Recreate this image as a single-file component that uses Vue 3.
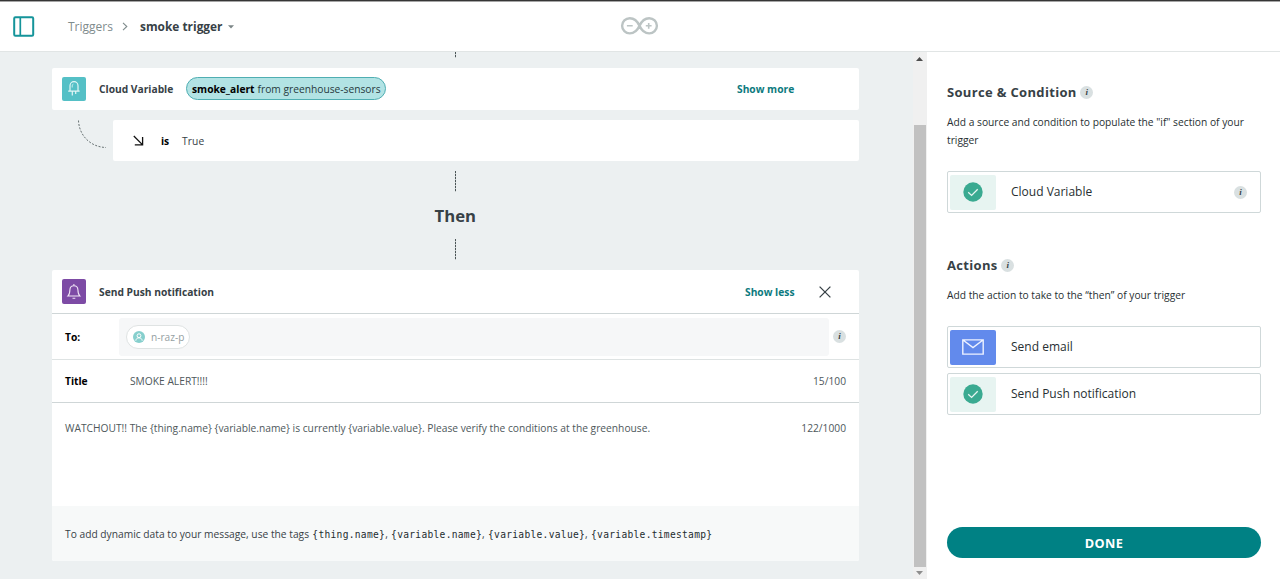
<script setup>
const tags = ['{thing.name}', '{variable.name}', '{variable.value}', '{variable.timestamp}']
const actions = [
  { label: 'Send email', kind: 'mail' },
  { label: 'Send Push notification', kind: 'check' },
]
</script>

<template>
  <div class="app">
    <header class="topbar">
      <svg class="panel-icon" width="22" height="22" viewBox="0 0 22 22" fill="none" stroke="#15949a" stroke-width="2">
        <rect x="1.2" y="1.2" width="19" height="18.6" rx="1.2" />
        <path d="M7.3 1v19" stroke-width="1.7" />
      </svg>
      <nav class="crumbs">
        <span class="crumb">Triggers</span>
        <svg class="chev" width="6" height="9" viewBox="0 0 6 9" fill="none" stroke="#7f8c8d" stroke-width="1.1"><path d="M1 .8l3.8 3.7L1 8.2" /></svg>
        <span class="current">smoke trigger</span>
        <svg class="caret" width="6" height="4" viewBox="0 0 6 4"><path d="M0 .2h6L3 3.6z" fill="#7b8586" /></svg>
      </nav>
      <svg class="logo" width="39" height="20" viewBox="0 0 39 20" fill="none" stroke="#bcc4c4" stroke-width="2.4">
        <path d="M19.5 9.8C17.6 5.5 14.2 2.2 9.8 2.2a7.7 7.6 0 0 0 0 15.2c4.4 0 7.800-3.300 9.700-7.600s5.300-7.600 9.700-7.600a7.700 7.600 0 0 1 0 15.200c-4.400 0-7.800-3.300-9.700-7.600z" />
        <path d="M6.900 9.800h5.800M25.800 9.800h5.800M28.700 6.900v5.800" stroke-width="1.600" />
      </svg>
    </header>

    <main class="body">
      <section class="canvas">
        <div class="dots dots-top"></div>
        <div class="card source">
          <span class="tile teal">
            <svg width="24" height="24" viewBox="0 0 24 24" fill="none" stroke="#e4f6f6" stroke-width="1.2">
              <path d="M8 14V8.700a4 4 0 0 1 8 0V14M6.200 14.100h11.400M10.300 14v4.500M13.700 14v3" />
              <path d="M10.200 10.500V8.800c0-1 .5-1.500 1.200-1.700" stroke-width=".8" />
            </svg>
          </span>
          <span class="name src-name">Cloud Variable</span>
          <span class="pill"><b>smoke_alert</b><span class="from">from greenhouse-sensors</span></span>
          <span class="link more">Show more</span>
        </div>
        <div class="cond-row">
          <svg class="curve" width="61" height="40" viewBox="0 0 61 40" fill="none" stroke="#667071" stroke-width="1" stroke-dasharray="2 1.500"><path d="M26.500 0.500C27 15 38 27 54 27.500" /></svg>
          <div class="card cond">
            <svg width="11" height="11" viewBox="0 0 11 11" fill="none" stroke="#111" stroke-width="1.300"><path d="M.8 1l8.600 8.600M9.600 2v7.800H1.800" /></svg>
            <b class="is">is</b>
            <span class="true">True</span>
          </div>
        </div>
        <div class="dots dots-a"></div>
        <h2 class="then">Then</h2>
        <div class="dots dots-b"></div>

        <div class="card push">
          <div class="push-head">
            <span class="tile purple">
              <svg width="24" height="25" viewBox="0 0 24 25" fill="none" stroke="#f0e6f6" stroke-width="1.100">
                <path d="M6 17c1.700-1.600 1.800-3 1.900-6.200.1-2.500 1.700-4 4-4s3.900 1.500 4 4c.1 3.200.2 4.600 1.900 6.200zM11.900 5v1.800M10.500 19.300h2.800" />
              </svg>
            </span>
            <span class="name push-name">Send Push notification</span>
            <span class="link less">Show less</span>
            <svg class="close" width="12" height="12" viewBox="0 0 12 12" fill="none" stroke="#374146" stroke-width="1.300"><path d="M.6.6l10.800 10.800M11.400.6L.6 11.400" /></svg>
          </div>
          <div class="to-row">
            <b class="label to-label">To:</b>
            <div class="field">
              <span class="chip">
                <svg width="12" height="12" viewBox="0 0 12 12"><circle cx="6" cy="6" r="6" fill="#86cfcd" /><g fill="none" stroke="#fff" stroke-width="1"><circle cx="6" cy="4.700" r="1.900" /><path d="M2.800 9.700c.3-2 1.400-2.900 3.200-2.900s2.900.9 3.200 2.900" /></g></svg>
                <span>n-raz-p</span>
              </span>
            </div>
            <i class="info">i</i>
          </div>
          <div class="title-row">
            <b class="label title-label">Title</b>
            <span class="title-val">SMOKE ALERT!!!!</span>
            <span class="count">15/100</span>
          </div>
          <div class="msg-row">
            <span class="msg">WATCHOUT!! The {thing.name} {variable.name} is currently {variable.value}. Please verify the conditions at the greenhouse.</span>
            <span class="count">122/1000</span>
          </div>
          <div class="hint">
            <span class="hint-text">To add dynamic data to your message, use the tags</span>
            <span v-for="(t, i) in tags" :key="t" class="tag"><code>{{ t }}</code><template v-if="i < tags.length - 1">,</template></span>
          </div>
        </div>
      </section>

      <div class="scroll">
        <svg width="7" height="4" viewBox="0 0 7 4"><path d="M0 4h7L3.500 0z" fill="#4d4d4d" /></svg>
        <div class="thumb"></div>
        <svg width="7" height="4" viewBox="0 0 7 4"><path d="M0 0h7L3.500 4z" fill="#8e8e8e" /></svg>
      </div>

      <aside class="side">
        <h3><span>Source &amp; Condition</span><i class="info">i</i></h3>
        <p>Add a source and condition to populate the "if" section of your<br />trigger</p>
        <div class="opt">
          <span class="thumbnail check">
            <svg width="20" height="20" viewBox="0 0 20 20"><circle cx="10" cy="10" r="9.700" fill="#3aaa91" /><path d="M5.200 10.200l3.400 3.200 6.100-6.200" fill="none" stroke="#e8f5f2" stroke-width="1.300" /></svg>
          </span>
          <span class="opt-label">Cloud Variable</span>
          <i class="info">i</i>
        </div>
        <h3 class="second"><span>Actions</span><i class="info">i</i></h3>
        <p>Add the action to take to the “then” of your trigger</p>
        <div v-for="a in actions" :key="a.label" class="opt">
          <span class="thumbnail" :class="a.kind">
            <svg v-if="a.kind === 'mail'" width="22" height="16" viewBox="0 0 22 16" fill="none" stroke="#eef2ff" stroke-width="1.400"><path d="M.8.9h20.400v14.200H.8zM1 1l10 7.500L21 1" /></svg>
            <svg v-else width="20" height="20" viewBox="0 0 20 20"><circle cx="10" cy="10" r="9.700" fill="#3aaa91" /><path d="M5.200 10.200l3.400 3.200 6.100-6.200" fill="none" stroke="#e8f5f2" stroke-width="1.300" /></svg>
          </span>
          <span class="opt-label">{{ a.label }}</span>
        </div>
        <button class="done">DONE</button>
      </aside>
    </main>
  </div>
</template>

<style>
body { margin: 0; overflow: hidden; }
</style>

<style scoped>
* { box-sizing: border-box; }
.app { width: 1280px; height: 579px; display: flex; flex-direction: column; background: #fff; font-family: "Open Sans", "Noto Sans", sans-serif; color: #374146; font-size: 10.240px; overflow: hidden; white-space: nowrap; }
svg { display: block; flex: none; }
.topbar { height: 52px; flex: none; border-top: 1px solid #353535; box-shadow: inset 0 1px #a5a5a5; border-bottom: 1px solid #e1e5e5; display: flex; align-items: center; padding-left: 13px; }
.panel-icon { margin-top: 1px; }
.crumbs { display: flex; align-items: center; margin-left: 33px; width: 552px; font-size: 12px; }
.crumb { color: #7f8c8d; width: 54px; }
.current { font-weight: 700; margin-left: 12px; width: 88px; font-size: 11.900px; }
.caret { margin-top: 2px; }
.body { flex: 1; display: flex; min-height: 0; }
.canvas { width: 913px; background: #ecf0f1; padding: 0 54px 0 52px; display: flex; flex-direction: column; }
.dots { width: 1px; margin-left: 403px; flex: none; background: repeating-linear-gradient(to bottom, #4b5557 0 2px, #c4caca 2px 3px); }
.dots-top { height: 6px; margin-bottom: 10px; }
.dots-a { height: 21px; margin-top: 10px; }
.dots-b { height: 21px; margin-bottom: 10px; }
.card { background: #fff; border-radius: 2px; }
.source { height: 41.500px; flex: none; display: flex; align-items: center; padding-left: 9.500px; }
.tile { width: 24px; height: 24px; border-radius: 2px; flex: none; }
.teal { background: #55c0c6; }
.purple { background: #7d4ba5; height: 25px; }
.name { font-weight: 700; margin-left: 13.500px; }
.src-name { width: 87px; }
.pill { height: 23px; width: 200px; border: 1px solid #4faeb2; border-radius: 12px; background: #b2e3e4; display: flex; align-items: center; padding-left: 5px; gap: 3px; color: #000; }
.from { color: #26393d; }
.link { color: #0c7a7e; font-weight: 700; }
.more { margin-left: 351px; }
.cond-row { display: flex; margin-top: 10.500px; flex: none; }
.cond { flex: 1; height: 41px; display: flex; align-items: center; padding-left: 20px; }
.is { color: #000; margin-left: 17px; width: 21px; }
.true { letter-spacing: .1px; }
.then { margin: 0 0 0 382.500px; height: 47px; line-height: 48px; font-size: 16.700px; font-weight: 700; flex: none; }
.push { height: 291px; flex: none; display: flex; flex-direction: column; }
.push-head { height: 44px; border-bottom: 1px solid #cfd6d7; display: flex; align-items: center; padding-left: 9.500px; }
.push-name { width: 646px; }
.less { width: 74px; }
.to-row { height: 46px; border-bottom: 1px solid #dee3e3; display: flex; align-items: center; padding: 0 13px; }
.label { color: #000; }
.to-label { width: 54px; }
.field { width: 710px; height: 38px; border-radius: 3px; background: #f6f7f8; padding-left: 7px; display: flex; align-items: center; }
.chip { height: 24px; width: 64px; border: 1px solid #dfe3e3; border-radius: 12px; background: #fff; display: flex; align-items: center; padding-left: 6px; gap: 6px; color: #95a0a2; font-size: 10.100px; }
.info { width: 13px; height: 13px; border-radius: 50%; background: #d9e0e1; color: #374146; font: italic 700 9px/13px "Liberation Serif", serif; letter-spacing: 0; text-align: center; flex: none; }
.to-row .info { margin-left: 4px; }
.title-row { height: 43px; border-bottom: 1px solid #cfd6d7; display: flex; align-items: center; padding: 0 13px; }
.title-label { width: 65px; }
.title-val, .msg, .count { color: #4e585b; }
.count { margin-left: auto; }
.msg-row { height: 103px; padding: 18px 13px; display: flex; }
.hint { height: 55px; background: #f7f9f9; display: flex; align-items: center; padding-left: 13px; gap: 3.300px; border-radius: 0 0 2px 2px; }
.tag code { font-family: "DejaVu Sans Mono", monospace; font-size: 9.600px; letter-spacing: .29px; color: #242c2f; }
.scroll { width: 14px; background: #f0f0f0; display: flex; flex-direction: column; align-items: center; padding: 5px 1px 4px 0; }
.thumb { width: 12px; height: 442px; margin: 64px 0 4px 1px; background: #c1c1c1; flex: none; }
.side { flex: 1; padding: 31px 19px 0 20px; display: flex; flex-direction: column; color: #272f32; }
h3 { margin: 0; height: 18px; display: flex; align-items: center; gap: 3.500px; font-size: 13px; letter-spacing: .33px; color: #374146; flex: none; }
.second { margin-top: 38px; }
p { margin: 12px 0 22px; line-height: 18px; }
.opt { height: 42px; margin-bottom: 5px; border: 1px solid #cfd8d9; border-radius: 2px; display: flex; align-items: center; padding: 0 13px 0 2px; font-size: 12px; flex: none; }
.opt-label { margin-bottom: 1px; }
.thumbnail { width: 46px; height: 35px; border-radius: 2px; display: flex; align-items: center; justify-content: center; margin-right: 15px; }
.check { background: #e7f4f1; }
.mail { background: #628aec; }
.opt .info { margin-left: auto; }
.done { margin-top: 107px; height: 31px; border: 0; border-radius: 16px; background: #008184; color: #fff; font: 700 12.700px "Open Sans", sans-serif; letter-spacing: .4px; flex: none; }
</style>
